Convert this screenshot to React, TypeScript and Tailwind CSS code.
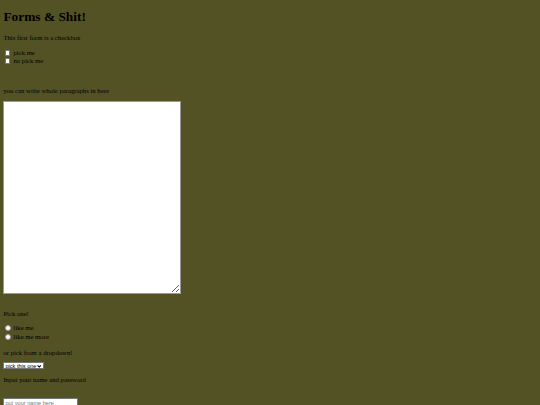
export default function App() {
  return (
    <div className="min-h-screen bg-[#535224] px-[3.4px] font-['Liberation_Serif',serif] text-[6.7px] text-black flex flex-col items-start">
      <h1 className="mt-[8px] h-[17px] text-[13.4px] leading-[17px] font-bold">Forms &amp; Shit!</h1>

      <p className="mt-[9px] leading-[8px]">This first form is a checkbox</p>
      <label className="mt-[7px] h-[8px] flex items-center gap-[3px] pl-[1.6px]">
        <input type="checkbox" className="appearance-none w-[5.5px] h-[5.5px] bg-white border-[0.5px] border-[#767676] rounded-[1px]" />
        <span className="leading-[8px]">pick me</span>
      </label>
      <label className="h-[8px] flex items-center gap-[3px] pl-[1.6px]">
        <input type="checkbox" className="appearance-none w-[5.5px] h-[5.5px] bg-white border-[0.5px] border-[#767676] rounded-[1px]" />
        <span className="leading-[8px]">no pick me</span>
      </label>

      <p className="mt-[22px] leading-[8px]">you can write whole paragraphs in here</p>
      <textarea className="mt-[6px] w-[178px] h-[193px] bg-white border border-[#9a9a9a]" />

      <p className="mt-[16px] leading-[8px]">Pick one!</p>
      <label className="mt-[6px] h-[8.5px] flex items-center gap-[3px] pl-[1.6px]">
        <input type="radio" name="pick" className="appearance-none w-[5.6px] h-[5.6px] rounded-full bg-white border-[0.5px] border-[#999]" />
        <span className="leading-[8px]">like me</span>
      </label>
      <label className="h-[8.5px] flex items-center gap-[3px] pl-[1.6px]">
        <input type="radio" name="pick" className="appearance-none w-[5.6px] h-[5.6px] rounded-full bg-white border-[0.5px] border-[#999]" />
        <span className="leading-[8px]">like me more</span>
      </label>

      <p className="mt-[7.5px] leading-[8px]">or pick from a dropdown!</p>
      <div className="relative mt-[5px] h-[7.5px] w-[41px] bg-white border-[0.5px] border-[#767676]">
        <select className="appearance-none block h-full w-full bg-transparent pl-[1px] py-0 font-['Liberation_Sans',sans-serif] text-[5.6px] leading-[6.5px] text-black">
          <option>pick this one</option>
          <option>or this one</option>
        </select>
        <svg viewBox="0 0 8 8" className="pointer-events-none absolute right-[1.5px] top-[1.2px] w-[4.5px] h-[4.5px]">
          <path d="M1 2.5 L4 5.5 L7 2.5" fill="none" stroke="#000" strokeWidth="1.8" />
        </svg>
      </div>

      <p className="mt-[7px] leading-[8px]">Input your name and password</p>
      <input
        type="text"
        placeholder="put your name here"
        className="mt-[13.5px] h-[10px] w-[75px] bg-white border-[0.5px] border-[#767676] px-[1px] font-['Liberation_Sans',sans-serif] text-[5.6px] placeholder:text-[#777]"
      />
    </div>
  );
}
